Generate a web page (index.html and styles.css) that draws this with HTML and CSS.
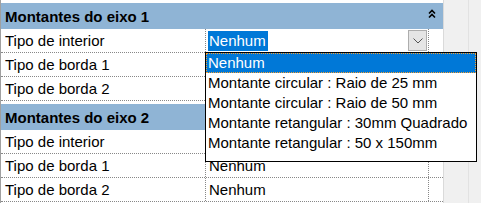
FILE: index.html
```html
<!DOCTYPE html>
<html lang="pt">
<head>
  <meta charset="UTF-8">
  <title>Propriedades</title>
  <link rel="stylesheet" href="styles.css">
</head>
<body>

  <div class="panel">
    <div class="grid">

      <div class="group">
        <div class="group-head">
          <span>Montantes do eixo 1</span>
          <svg class="collapse" width="8" height="10" viewBox="0 0 8 10">
            <path d="M1 4.5 L4 1.5 L7 4.5 M1 8.5 L4 5.5 L7 8.5" fill="none" stroke="#000" stroke-width="1.6"/>
          </svg>
        </div>
        <div class="row">
          <div class="cell name">Tipo de interior</div>
          <div class="cell value">
            <span class="picked">Nenhum</span>
            <span class="drop-btn">
              <svg width="10" height="6" viewBox="0 0 10 6">
                <path d="M0.5 0.5 L5 5 L9.5 0.5" fill="none" stroke="#555" stroke-width="1"/>
              </svg>
            </span>
          </div>
          <div class="cell extra"></div>
        </div>
        <div class="row">
          <div class="cell name">Tipo de borda 1</div>
          <div class="cell value">Nenhum</div>
          <div class="cell extra"></div>
        </div>
        <div class="row">
          <div class="cell name">Tipo de borda 2</div>
          <div class="cell value">Nenhum</div>
          <div class="cell extra"></div>
        </div>
      </div>

      <div class="group">
        <div class="group-head">
          <span>Montantes do eixo 2</span>
        </div>
        <div class="row">
          <div class="cell name">Tipo de interior</div>
          <div class="cell value">Nenhum</div>
          <div class="cell extra"></div>
        </div>
        <div class="row">
          <div class="cell name">Tipo de borda 1</div>
          <div class="cell value">Nenhum</div>
          <div class="cell extra"></div>
        </div>
        <div class="row">
          <div class="cell name">Tipo de borda 2</div>
          <div class="cell value">Nenhum</div>
          <div class="cell extra"></div>
        </div>
      </div>

      <!-- lista aberta do combo -->
      <ul class="dropdown">
        <li class="active">Nenhum</li>
        <li>Montante circular : Raio de 25 mm</li>
        <li>Montante circular : Raio de 50 mm</li>
        <li>Montante retangular : 30mm Quadrado</li>
        <li>Montante retangular : 50 x 150mm</li>
      </ul>
    </div>

    <div class="side">
      <div class="side-a"></div>
      <div class="side-b"></div>
    </div>
  </div>

</body>
</html>
```

FILE: styles.css
```css
body { margin: 0; background: #f0f0f0; font-family: "Liberation Sans", Arial, sans-serif; font-size: 15px; color: #000; }
.panel { display: flex; height: 203px; overflow: hidden; }

.grid { position: relative; width: 442px; padding-top: 3px; background: #fff; border-left: 1px solid #a0a0a0; }
.group + .group { margin-top: 3px; }
.group-head { display: flex; align-items: center; justify-content: space-between; height: 26px; padding: 0 6px 0 4px; background: #8fb4d5; font-weight: bold; }
.collapse { margin-top: -4px; margin-right: 1px; }

.row { display: flex; height: 23px; border-bottom: 1px dotted #888; }
.cell { display: flex; align-items: center; line-height: 23px; white-space: nowrap; }
.name { width: 200px; padding-left: 4px; border-right: 1px dotted #888; }
.value { width: 219px; padding-left: 3px; border-right: 1px dotted #888; }
.extra { flex: 1; }

.picked { background: #0078d7; color: #fff; line-height: 20px; padding: 0 2px 0 1px; margin-left: -1px; }
.drop-btn { display: flex; align-items: center; justify-content: center; width: 19px; height: 21px; margin-left: auto; margin-right: 1px; background: #e5e5e5; border: 1px solid #adadad; box-sizing: border-box; }

.dropdown { position: absolute; left: 204px; top: 52px; width: 270px; height: 108px; margin: 0; padding: 0; list-style: none; background: #fff; border: 1px solid #000; }
.dropdown li { height: 20px; line-height: 20px; padding-left: 2px; white-space: nowrap; }
.dropdown li.active { background: #0078d7; color: #fff; outline: 1px dotted #f7a030; outline-offset: -1px; }

.side { display: flex; flex: 1; }
.side-a { width: 24px; border-left: 1px solid #dadada; }
.side-b { flex: 1; border-left: 1px solid #e2e2e2; }
```
